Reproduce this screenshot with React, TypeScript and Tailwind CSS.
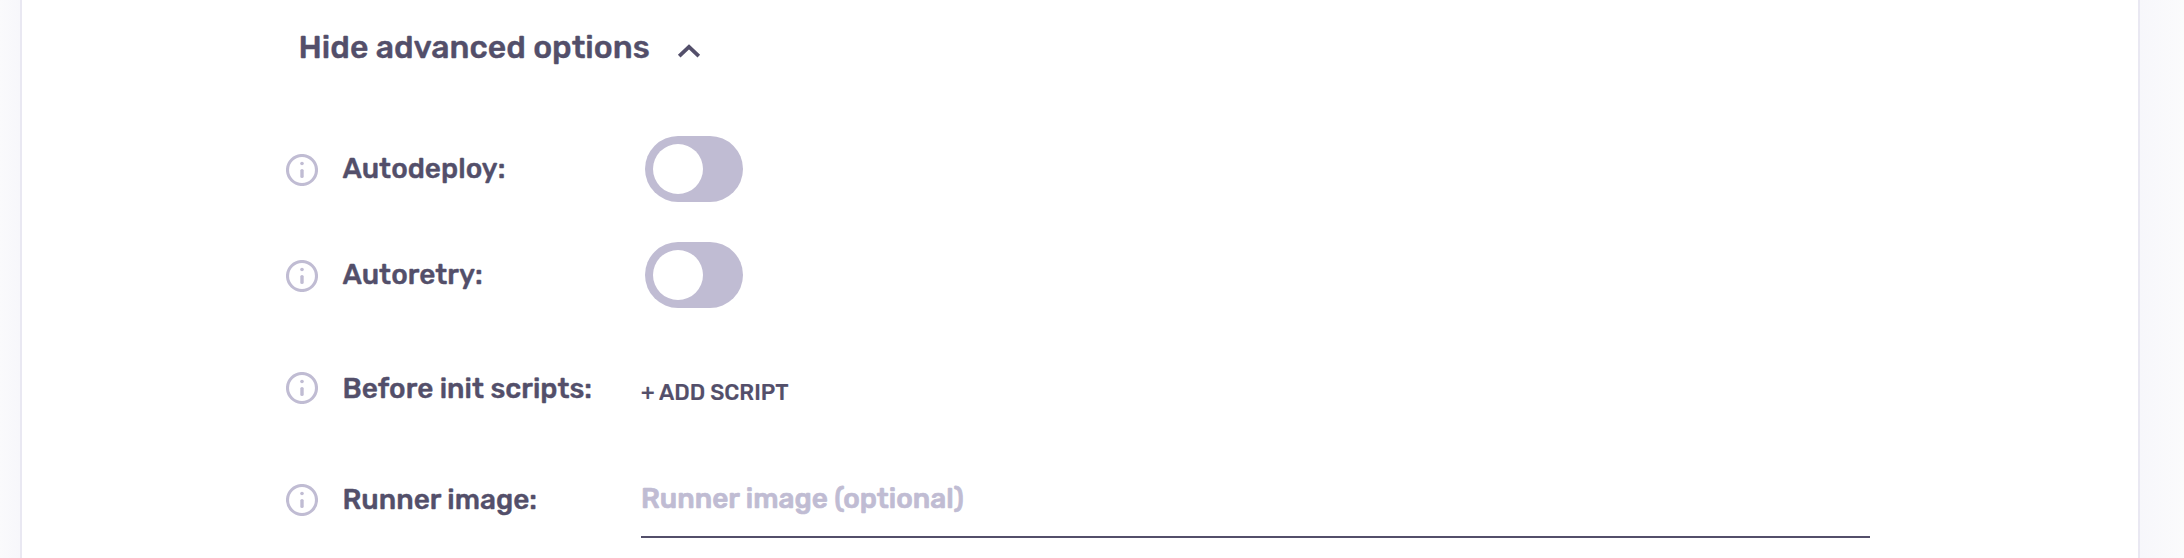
import type { ReactNode } from 'react';

function InfoIcon({ className = '' }: { className?: string }) {
  return (
    <svg className={`size-8 shrink-0 ${className}`} viewBox="0 0 32 32" fill="none" stroke="#c0bcd3">
      <circle cx="16" cy="16" r="14.5" strokeWidth="3.1" />
      <path d="M16 16.6v5.8" strokeWidth="3.4" strokeLinecap="round" />
      <circle cx="16" cy="9.5" r="1.8" fill="#c0bcd3" stroke="none" />
    </svg>
  );
}

function Toggle() {
  return (
    <button type="button" role="switch" aria-checked="false" className="ml-1 flex h-[66px] w-[98px] items-center rounded-full bg-[#c0bcd3] pl-2">
      <span className="size-[50px] rounded-full bg-white" />
    </button>
  );
}

function Field({ label, iconClass, className, children }: { label: string; iconClass?: string; className: string; children: ReactNode }) {
  return (
    <div className={`flex ${className}`}>
      <div className="flex w-[355px] shrink-0 items-center gap-[24.5px]">
        <InfoIcon className={iconClass} />
        <span className="text-[28px] leading-8 font-medium whitespace-nowrap">{label}</span>
      </div>
      {children}
    </div>
  );
}

export default function App() {
  return (
    <div className="flex h-[558px] w-full overflow-hidden bg-[#f9f9fc] font-['Rubik','Roboto',sans-serif] text-[#534f6a] [-webkit-text-stroke:0.4px]">
      <div className="w-5 bg-linear-to-r from-[#fafafc] to-[#f7f7fb]" />
      <main className="w-[2120px] border-x-2 border-[#e9e8f2] bg-white pl-[264px]">
        <button type="button" className="ml-[12.5px] flex h-[94px] items-center gap-[27px]">
          <span className="text-[32px] leading-10 font-medium whitespace-nowrap">Hide advanced options</span>
          <svg className="mt-2 h-4 w-6" viewBox="0 0 24 16" fill="none" stroke="#534f6a" strokeWidth="3.7">
            <path d="M2.2 13.2 12 3.8l9.8 9.4" />
          </svg>
        </button>
        <Field label="Autodeploy:" iconClass="mt-[2px]" className="mt-[42px] h-[66px] items-center">
          <Toggle />
        </Field>
        <Field label="Autoretry:" iconClass="mt-[2px]" className="mt-10 h-[66px] items-center">
          <Toggle />
        </Field>
        <Field label="Before init scripts:" iconClass="-mt-[2px]" className="mt-[65px] h-8 items-center">
          <button type="button" className="mt-2 text-[22px] leading-8 font-medium whitespace-nowrap [-webkit-text-stroke:0.2px]">+ ADD SCRIPT</button>
        </Field>
        <Field label="Runner image:" className="mt-[59px] h-[74px] items-start pt-[20px]">
          <div className="-mt-[20px] h-[74px] w-[1229px] border-b-2 border-[#534f6a]">
            <input aria-label="Runner image" placeholder="Runner image (optional)" className="h-[69px] w-full text-[28px] font-medium outline-none placeholder:text-[#c0bcd3] placeholder:[-webkit-text-stroke:0.7px_#c0bcd3]" />
          </div>
        </Field>
      </main>
      <div className="flex-1 bg-linear-to-r from-[#f7f7fb] to-[#fbfbfc]" />
    </div>
  );
}
